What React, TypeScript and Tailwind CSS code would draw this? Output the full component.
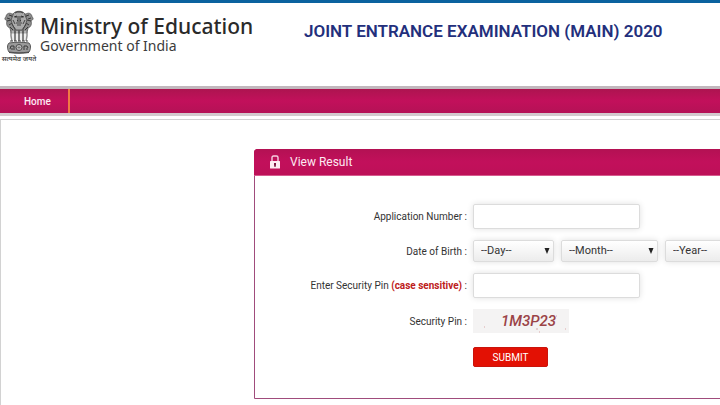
import type { ReactNode } from "react";

function Emblem() {
  return (
    <svg className="h-[46px] w-[30px]" viewBox="0 0 30 46" fill="none" aria-hidden="true">
      {/* side lions */}
      <path
        d="M8 5C5 3 2 5 2 8c-2 1-1 3 1 4-1 3 0 6 3 7l1 5h16l1-5c3-1 4-4 3-7 2-1 3-3 1-4 0-3-3-5-6-3Z"
        fill="#8d8d8d"
        stroke="#555"
        strokeWidth="0.800"
      />
      <path d="M3 9l3 1M3 12l4-1M5 16l3-2M27 9l-3 1M27 12l-4-1M25 16l-3-2" stroke="#3a3a3a" />
      <path d="M5 6l3 1 1 3-2 1M25 6l-3 1-1 3 2 1M6 18l3 3M24 18l-3 3" stroke="#383838" />
      {/* front lion */}
      <path
        d="M9 6c0-5 12-5 12 0l2 5-2 6-3 4h-6l-3-4-2-6Z"
        fill="#aaa"
        stroke="#4a4a4a"
        strokeWidth="0.800"
      />
      <path d="M11 4l2-1h4l2 1M10 8l3-1M20 8l-3-1M14 7v4l-1 1h4l-1-1V7" stroke="#383838" />
      <path d="M12 14h6M13 16h4M9 11l2 4M21 11l-2 4M8 15l3 5M22 15l-3 5" stroke="#444" />
      <circle cx="12" cy="8" r="0.8" fill="#222" />
      <circle cx="18" cy="8" r="0.8" fill="#222" />
      {/* legs */}
      <path d="M7 22v5l1 5M23 22v5l-1 5" stroke="#8a8a8a" strokeWidth="1.500" />
      <path d="M11 20v12M15 21v11M19 20v12" stroke="#5a5a5a" strokeWidth="1.500" />
      <path d="M9 22v9M13 22v9M17 22v9M21 22v9" stroke="#dedede" />
      <path d="M6 32h3M10 32h3M14 32h3M18 32h3M22 32h2" stroke="#444" strokeWidth="1.200" />
      {/* abacus with wheel */}
      <path d="M5 34c7-1 13-1 20 0 2 2 2 6 0 9-7 1-13 1-20 0-2-3-2-7 0-9Z" fill="#9a9a9a" stroke="#555" />
      <circle cx="15" cy="38.500" r="3" fill="#e4e4e4" stroke="#444" />
      <path d="M15 36v5M12.500 38.500h5M13 36.500l4 4M17 36.500l-4 4" stroke="#666" strokeWidth="0.600" />
      <path d="M6 40l1-3h3v4M8 41v-2M20 41v-4h3l1 2M23 39v2" stroke="#383838" />
      <path d="M5 43.500c6 1 14 1 20 0" stroke="#444" />
    </svg>
  );
}

function LockIcon() {
  return (
    <svg className="h-[14px] w-[12px]" viewBox="0 0 12 14" aria-hidden="true">
      <path d="M3 7V2.500Q3 1 4.500 1h3Q9 1 9 2.500V7" fill="none" stroke="#f6cfe0" strokeWidth="1.400" />
      <rect x="1" y="6" width="10" height="7.500" rx="0.500" fill="#fdeaf2" />
      <path d="M5 8h2v2l-.5 2h-1L5 10Z" fill="#7d1744" />
    </svg>
  );
}

function Captcha() {
  return (
    <svg className="h-6 w-24 bg-[#f4f3f3]" viewBox="0 0 96 24" role="img" aria-label="Security pin 1M3P23">
      <text
        x="28"
        y="17"
        fill="#9b4347"
        fontSize="15"
        fontStyle="italic"
        fontWeight="500"
        fontFamily="Roboto, sans-serif"
      >
        1M3P23
      </text>
      <path d="M11 18h1M64 19v2M92 20h1M66 23h1M83 7h1" stroke="#d9a9a9" />
    </svg>
  );
}

type RowProps = {
  id: string;
  label: ReactNode;
  children: ReactNode;
};

function Row({ id, label, children }: RowProps) {
  return (
    <div className="flex items-center gap-1.5">
      <label htmlFor={id} className="w-[212px] shrink-0 text-right whitespace-nowrap">
        {label} :
      </label>
      {children}
    </div>
  );
}

function TextField({ id }: { id: string }) {
  return (
    <input
      id={id}
      type="text"
      className="h-[25px] w-[167px] rounded-xs border border-[#dcdcdc] bg-white px-2 text-[11px] shadow-[0_0_6px_#e0e0e0] outline-none"
    />
  );
}

function Picker({ id, label, text, width }: { id: string; label: string; text: string; width: string }) {
  return (
    <div className={`relative shrink-0 ${width}`}>
      <select
        id={id}
        aria-label={label}
        className="block h-[22px] w-full appearance-none rounded-xs border border-[#dcdcdc] bg-linear-to-b from-white to-[#ececec] px-[7px] text-[11px] text-[#333] shadow-[0_0_6px_#e0e0e0] outline-none"
      >
        <option>{text}</option>
      </select>
      <svg className="pointer-events-none absolute top-2 right-1 h-[6px] w-[6px]" viewBox="0 0 6 6" aria-hidden="true">
        <path d="M0.500 0h5L3 6Z" fill="#222" />
      </svg>
    </div>
  );
}

export default function App() {
  return (
    <div className="flex min-h-screen flex-col overflow-hidden bg-white font-['Roboto',sans-serif] text-[#333]">
      <header className="flex h-[86px] items-start border-t-3 border-[#0a629f]">
        <div className="flex w-[304px] shrink-0 gap-0.5">
          <div className="flex w-[38px] flex-col items-center pt-1.5">
            <Emblem />
            <span className="font-['Noto_Sans',sans-serif] text-[7px] leading-[8px] font-medium whitespace-nowrap text-[#333]">
              सत्यमेव जयते
            </span>
          </div>
          <div className="pt-[11px] font-['Noto_Sans',sans-serif] whitespace-nowrap">
            <div className="text-[21px] leading-6 font-medium text-[#2a2a2a]">Ministry of Education</div>
            <div className="text-[14px] leading-4 text-[#3c3c3c]">Government of India</div>
          </div>
        </div>
        <h1 className="pt-4 text-[17px] leading-6 font-semibold whitespace-nowrap text-[#232f7c]">
          JOINT ENTRANCE EXAMINATION (MAIN) 2020
        </h1>
      </header>

      <nav className="flex h-[30px] border-t-3 border-b-3 border-t-[#c2b7bd] border-b-[#d3cbce] bg-[#c01059] bg-linear-to-b from-[#ad1450] via-[#c2105b] to-[#b41256]">
        <a
          href="#home"
          className="flex w-[70px] items-center border-r-2 border-[#f07a43] pl-6 text-[10px] font-medium text-[#fdeaf2]"
        >
          Home
        </a>
      </nav>

      <main className="mt-[3px] flex-1 border-t border-l border-[#d2d2d2] pt-[29px] pl-[253px]">
        <section className="-mr-2 rounded-t-sm border border-[#a04c7c]">
          <h2 className="-mx-px -mt-px flex h-[27px] items-center gap-[9px] rounded-t-sm border-b border-[#d65b8e] bg-[#c01059] bg-linear-to-b from-[#b31153] via-[#c2105b] to-[#bd1058] pl-[15px] text-[12px] text-[#fdeaf2]">
            <LockIcon />
            View Result
          </h2>
          <form className="flex flex-col gap-[11px] pt-7 pb-[31px] text-[10px]" onSubmit={(e) => e.preventDefault()}>
            <Row id="application" label="Application Number">
              <TextField id="application" />
            </Row>
            <Row id="day" label="Date of Birth">
              <div className="flex gap-[7px]">
                <Picker id="day" label="Day of birth" text="--Day--" width="w-[81px]" />
                <Picker id="month" label="Month of birth" text="--Month--" width="w-[97px]" />
                <Picker id="year" label="Year of birth" text="--Year--" width="w-[81px]" />
              </div>
            </Row>
            <Row
              id="pin"
              label={
                <>
                  Enter Security Pin <b className="text-[#bd2020]">(case sensitive)</b>
                </>
              }
            >
              <TextField id="pin" />
            </Row>
            <div className="flex items-center gap-1.5">
              <span className="w-[212px] shrink-0 text-right">Security Pin :</span>
              <Captcha />
            </div>
            <div className="pt-[3px] pl-[218px]">
              <button
                type="submit"
                className="block h-5 w-[75px] rounded-xs border border-[#c9140c] bg-[#e31104] text-[10px] text-white"
              >
                SUBMIT
              </button>
            </div>
          </form>
        </section>
      </main>
    </div>
  );
}
